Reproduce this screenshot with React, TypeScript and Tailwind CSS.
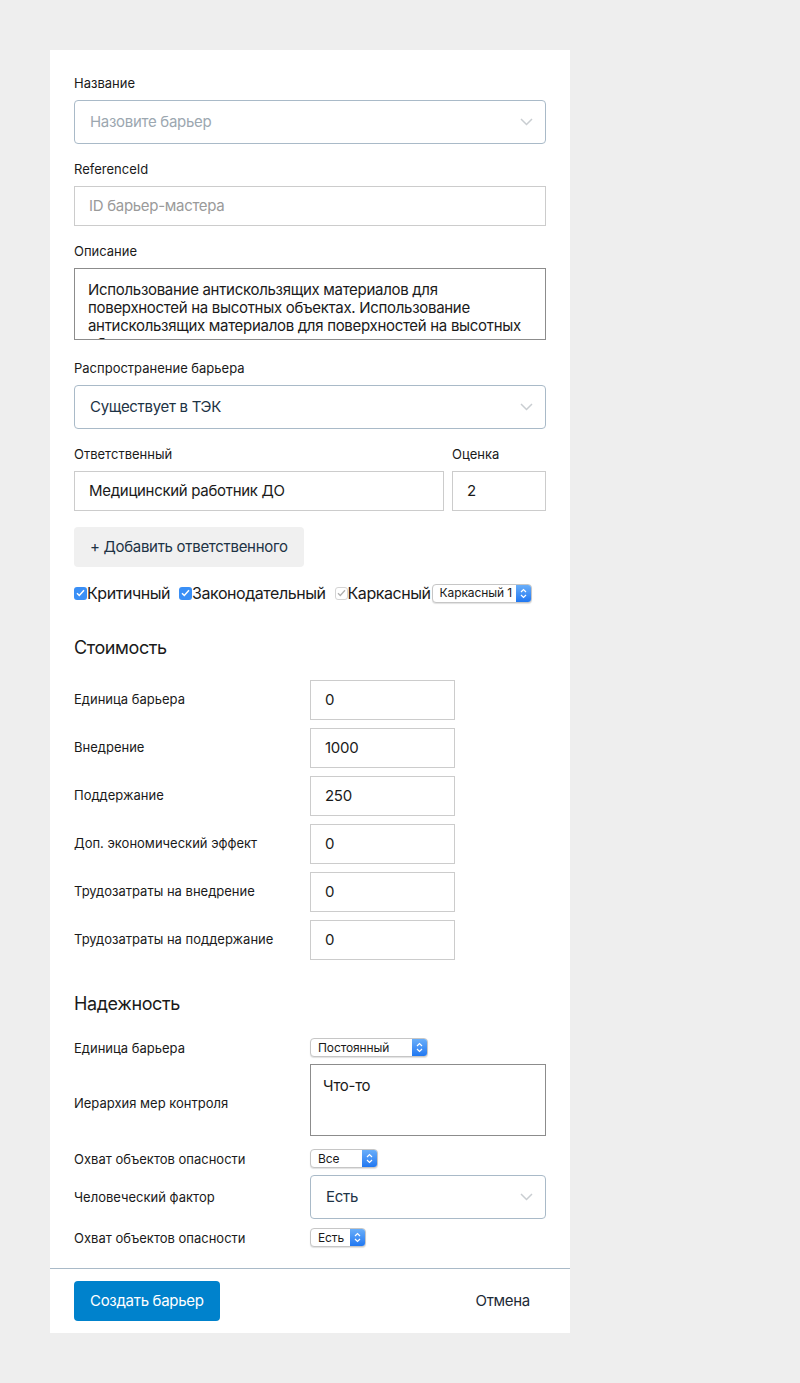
import React from 'react';

const font = { fontFamily: 'Inter, "Noto Sans", sans-serif' };

function Chevron() {
  return (
    <svg width="13" height="8" viewBox="0 0 13 8" className="shrink-0">
      <path d="M1 1l5.5 5.5L12 1" fill="none" stroke="#c9cdd1" strokeWidth="1.5" />
    </svg>
  );
}

function BigSelect({ value, placeholder }: { value?: string; placeholder?: string }) {
  return (
    <div className="flex h-[44px] items-center justify-between rounded-[4px] border border-[#a9bac8] bg-white pl-[15px] pr-[12px]">
      {value ? (
        <span className="text-[15px] tracking-[-0.3px] text-[#1d3345]">{value}</span>
      ) : (
        <span className="text-[15px] tracking-[-0.3px] text-[#9ca7b0]">{placeholder}</span>
      )}
      <Chevron />
    </div>
  );
}

function TextInput({ value, placeholder, className = '' }: { value?: string; placeholder?: string; className?: string }) {
  return (
    <div className={`flex h-[40px] items-center border border-[#cccccc] bg-white px-[14px] ${className}`}>
      {value ? (
        <span className="text-[15px] tracking-[-0.3px] text-[#1a1a1a]">{value}</span>
      ) : (
        <span className="text-[15px] tracking-[-0.3px] text-[#9a9a9a]">{placeholder}</span>
      )}
    </div>
  );
}

// macOS-like small native select
function MiniSelect({ value, width }: { value: string; width: string }) {
  return (
    <div className={`flex h-[19px] items-stretch overflow-hidden rounded-[4px] border border-[#c6c6c6] bg-white shadow-[0_1px_1px_rgba(0,0,0,0.12)] ${width}`}>
      <span className="flex flex-1 items-center pl-[7px] text-[12px] leading-none tracking-[-0.1px] text-[#1a1a1a]">{value}</span>
      <span className="flex w-[15px] items-center justify-center bg-gradient-to-b from-[#69aef9] to-[#1f77f1]">
        <svg width="7" height="11" viewBox="0 0 7 11">
          <path d="M1 4l2.5-2.5L6 4M1 7l2.5 2.5L6 7" fill="none" stroke="#fff" strokeWidth="1.2" />
        </svg>
      </span>
    </div>
  );
}

function Check({ disabled = false }: { disabled?: boolean }) {
  if (disabled) {
    return (
      <span className="flex h-[13px] w-[13px] items-center justify-center rounded-[3px] border border-[#d4d4d4] bg-white">
        <svg width="9" height="8" viewBox="0 0 9 8">
          <path d="M1 4.2l2.3 2.3L8 1.2" fill="none" stroke="#b0b0b0" strokeWidth="1.3" />
        </svg>
      </span>
    );
  }
  return (
    <span className="flex h-[13px] w-[13px] items-center justify-center rounded-[3px] bg-[#3a8ff6]">
      <svg width="9" height="8" viewBox="0 0 9 8">
        <path d="M1 4.2l2.3 2.3L8 1.2" fill="none" stroke="#fff" strokeWidth="1.5" />
      </svg>
    </span>
  );
}

function Label({ children }: { children: React.ReactNode }) {
  return <div className="mb-2 text-[13px] leading-[18px] text-[#1a1a1a]">{children}</div>;
}

const costRows = [
  ['Единица барьера', '0'],
  ['Внедрение', '1000'],
  ['Поддержание', '250'],
  ['Доп. экономический эффект', '0'],
  ['Трудозатраты на внедрение', '0'],
  ['Трудозатраты на поддержание', '0'],
];

export default function App() {
  return (
    <div className="min-h-[1383px] bg-[#eeeeee] pl-[50px] pt-[50px]" style={font}>
      <div className="w-[520px] bg-white">
        <div className="px-6 pb-[21px] pt-6">
          <div>
            <Label>Название</Label>
            <BigSelect placeholder="Назовите барьер" />
          </div>

          <div className="mt-[16px]">
            <Label>ReferenceId</Label>
            <TextInput placeholder="ID барьер-мастера" />
          </div>

          <div className="mt-[16px]">
            <Label>Описание</Label>
            <div className="h-[72px] overflow-hidden border border-[#8c8c8c] bg-white px-[13px] pt-[12px] text-[15px] leading-[18px] tracking-[-0.3px] text-[#1a1a1a]">
              Использование антискользящих материалов для поверхностей на высотных объектах. Использование антискользящих материалов для поверхностей на высотных объектах.
            </div>
          </div>

          <div className="mt-[19px]">
            <Label>Распространение барьера</Label>
            <BigSelect value="Существует в ТЭК" />
          </div>

          <div className="mt-[16px] flex gap-2">
            <div className="flex-1">
              <Label>Ответственный</Label>
              <TextInput value="Медицинский работник ДО" />
            </div>
            <div className="w-[94px]">
              <Label>Оценка</Label>
              <TextInput value="2" />
            </div>
          </div>

          <button className="mt-[16px] h-[40px] rounded-[4px] bg-[#f0f0f0] px-4 text-[15px] tracking-[-0.3px] text-[#1d3345]">
            + Добавить ответственного
          </button>

          <div className="mt-[17px] flex h-[18px] items-center text-[16px] tracking-[-0.45px] text-[#1a1a1a]">
            <Check />
            <span>Критичный</span>
            <span className="ml-[9px]"><Check /></span>
            <span>Законодательный</span>
            <span className="ml-[9px]"><Check disabled /></span>
            <span>Каркасный</span>
            <span className="ml-px"><MiniSelect value="Каркасный 1" width="w-[100px]" /></span>
          </div>

          <h3 className="mt-[34px] text-[18px] leading-[24px] tracking-[-0.4px] text-[#1a1a1a]">Стоимость</h3>

          <div className="mt-[20px] flex flex-col gap-2">
            {costRows.map(([label, value], i) => (
              <div key={i} className="flex items-center">
                <div className="w-[236px] text-[13px] text-[#1a1a1a]">{label}</div>
                <TextInput value={value} className="w-[145px]" />
              </div>
            ))}
          </div>

          <h3 className="mt-[32px] text-[18px] leading-[24px] tracking-[-0.4px] text-[#1a1a1a]">Надежность</h3>

          <div className="mt-[22px] flex items-center">
            <div className="w-[236px] text-[13px] leading-[18px] text-[#1a1a1a]">Единица барьера</div>
            <MiniSelect value="Постоянный" width="w-[118px]" />
          </div>

          <div className="mt-[7px] flex items-center">
            <div className="w-[236px] pt-[5px] text-[13px] leading-[18px] text-[#1a1a1a]">Иерархия мер контроля</div>
            <div className="h-[72px] flex-1 border border-[#8c8c8c] px-[12px] pt-[12px] text-[15px] leading-[18px] tracking-[-0.3px] text-[#1a1a1a]">
              Что-то
            </div>
          </div>

          <div className="mt-[13px] flex items-center">
            <div className="w-[236px] text-[13px] leading-[18px] text-[#1a1a1a]">Охват объектов опасности</div>
            <MiniSelect value="Все" width="w-[68px]" />
          </div>

          <div className="mt-[7px] flex items-center">
            <div className="w-[236px] text-[13px] leading-[18px] text-[#1a1a1a]">Человеческий фактор</div>
            <div className="flex-1">
              <BigSelect value="Есть" />
            </div>
          </div>

          <div className="mt-[9px] flex items-center">
            <div className="w-[236px] text-[13px] leading-[18px] text-[#1a1a1a]">Охват объектов опасности</div>
            <MiniSelect value="Есть" width="w-[56px]" />
          </div>
        </div>

        <div className="flex items-center justify-between border-t border-[#a9bac8] px-6 py-3">
          <button className="h-[40px] rounded-[4px] bg-[#0082cc] px-4 text-[15px] tracking-[-0.3px] text-white">Создать барьер</button>
          <button className="h-[40px] px-4 text-[15px] tracking-[-0.3px] text-[#1d2a36]">Отмена</button>
        </div>
      </div>
    </div>
  );
}
